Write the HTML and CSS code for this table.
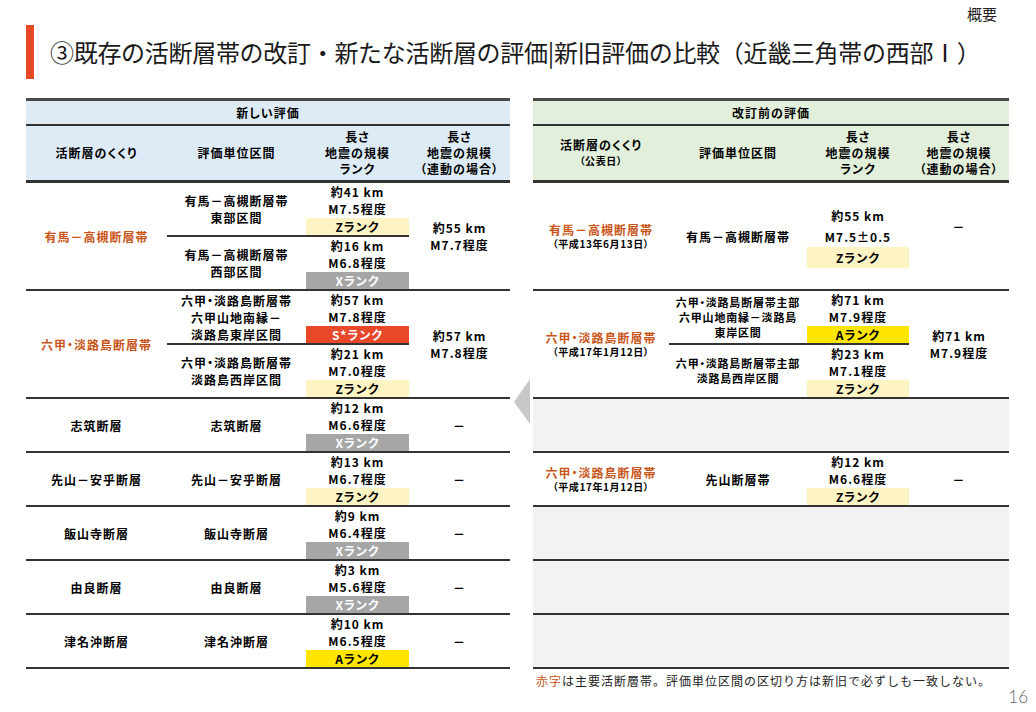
FILE: index.html
```html
<!DOCTYPE html>
<html lang="ja">
<head>
<meta charset="utf-8">
<title>新旧評価の比較</title>
<link rel="stylesheet" href="styles.css">
</head>
<body>
<div class="slide">
  <div class="topbar"><span class="section">概要</span></div>
  <div class="title-row">
    <div class="title-bar"></div>
    <h1 class="title">③既存の活断層帯の改訂・新たな活断層の評価|新旧評価の比較（近畿三角帯の西部Ⅰ）</h1>
  </div>

  <div class="tables">
    <!-- 新しい評価 -->
    <div class="tbl tbl-new">
      <div class="cap">新しい評価</div>
      <div class="head">
        <div class="cell c1">活断層のくくり</div>
        <div class="cell c2">評価単位区間</div>
        <div class="cell c3h">長さ<br>地震の規模<br>ランク</div>
        <div class="cell c4">長さ<br>地震の規模<br>（連動の場合）</div>
      </div>

      <div class="grp">
        <div class="cell c1 red">有馬－高槻断層帯</div>
        <div class="mid">
          <div class="sub">
            <div class="cell c2">有馬－高槻断層帯<br>東部区間</div>
            <div class="c3"><div class="ln">約41 km</div><div class="ln">M7.5程度</div><div class="rank rz">Zランク</div></div>
          </div>
          <div class="sub">
            <div class="cell c2">有馬－高槻断層帯<br>西部区間</div>
            <div class="c3"><div class="ln">約16 km</div><div class="ln">M6.8程度</div><div class="rank rx">Xランク</div></div>
          </div>
        </div>
        <div class="cell c4">約55 km<br>M7.7程度</div>
      </div>

      <div class="grp">
        <div class="cell c1 red">六甲・淡路島断層帯</div>
        <div class="mid">
          <div class="sub">
            <div class="cell c2">六甲・淡路島断層帯<br>六甲山地南縁－<br>淡路島東岸区間</div>
            <div class="c3"><div class="ln">約57 km</div><div class="ln">M7.8程度</div><div class="rank rs">S*ランク</div></div>
          </div>
          <div class="sub">
            <div class="cell c2">六甲・淡路島断層帯<br>淡路島西岸区間</div>
            <div class="c3"><div class="ln">約21 km</div><div class="ln">M7.0程度</div><div class="rank rz">Zランク</div></div>
          </div>
        </div>
        <div class="cell c4">約57 km<br>M7.8程度</div>
      </div>

      <div class="grp">
        <div class="cell c1">志筑断層</div>
        <div class="mid">
          <div class="sub">
            <div class="cell c2">志筑断層</div>
            <div class="c3"><div class="ln">約12 km</div><div class="ln">M6.6程度</div><div class="rank rx">Xランク</div></div>
          </div>
        </div>
        <div class="cell c4">－</div>
      </div>

      <div class="grp">
        <div class="cell c1">先山－安乎断層</div>
        <div class="mid">
          <div class="sub">
            <div class="cell c2">先山－安乎断層</div>
            <div class="c3"><div class="ln">約13 km</div><div class="ln">M6.7程度</div><div class="rank rz">Zランク</div></div>
          </div>
        </div>
        <div class="cell c4">－</div>
      </div>

      <div class="grp">
        <div class="cell c1">飯山寺断層</div>
        <div class="mid">
          <div class="sub">
            <div class="cell c2">飯山寺断層</div>
            <div class="c3"><div class="ln">約9 km</div><div class="ln">M6.4程度</div><div class="rank rx">Xランク</div></div>
          </div>
        </div>
        <div class="cell c4">－</div>
      </div>

      <div class="grp">
        <div class="cell c1">由良断層</div>
        <div class="mid">
          <div class="sub">
            <div class="cell c2">由良断層</div>
            <div class="c3"><div class="ln">約3 km</div><div class="ln">M5.6程度</div><div class="rank rx">Xランク</div></div>
          </div>
        </div>
        <div class="cell c4">－</div>
      </div>

      <div class="grp">
        <div class="cell c1">津名沖断層</div>
        <div class="mid">
          <div class="sub">
            <div class="cell c2">津名沖断層</div>
            <div class="c3"><div class="ln">約10 km</div><div class="ln">M6.5程度</div><div class="rank ra">Aランク</div></div>
          </div>
        </div>
        <div class="cell c4">－</div>
      </div>
    </div>

    <div class="gap">
      <svg class="arrow" width="16" height="45" viewBox="0 0 16 45"><polygon points="16,0 16,45 0,23" fill="#c8c8c8"/></svg>
    </div>

    <!-- 改訂前の評価 -->
    <div class="tbl tbl-old">
      <div class="cap">改訂前の評価</div>
      <div class="head">
        <div class="cell c1 stack"><span>活断層のくくり</span><span class="date">（公表日）</span></div>
        <div class="cell c2">評価単位区間</div>
        <div class="cell c3h">長さ<br>地震の規模<br>ランク</div>
        <div class="cell c4">長さ<br>地震の規模<br>（連動の場合）</div>
      </div>

      <div class="grp">
        <div class="cell c1 stack"><span class="red">有馬－高槻断層帯</span><span class="date">（平成13年6月13日）</span></div>
        <div class="mid">
          <div class="sub tall">
            <div class="cell c2">有馬－高槻断層帯</div>
            <div class="c3 loose"><div class="ln">約55 km</div><div class="ln">M7.5±0.5</div><div class="rank rz">Zランク</div></div>
          </div>
        </div>
        <div class="cell c4 raise">－</div>
      </div>

      <div class="grp">
        <div class="cell c1 stack"><span class="red">六甲・淡路島断層帯</span><span class="date">（平成17年1月12日）</span></div>
        <div class="mid">
          <div class="sub">
            <div class="cell c2 small">六甲・淡路島断層帯主部<br>六甲山地南縁－淡路島<br>東岸区間</div>
            <div class="c3"><div class="ln">約71 km</div><div class="ln">M7.9程度</div><div class="rank ra">Aランク</div></div>
          </div>
          <div class="sub">
            <div class="cell c2 small">六甲・淡路島断層帯主部<br>淡路島西岸区間</div>
            <div class="c3"><div class="ln">約23 km</div><div class="ln">M7.1程度</div><div class="rank rz">Zランク</div></div>
          </div>
        </div>
        <div class="cell c4">約71 km<br>M7.9程度</div>
      </div>

      <div class="grp empty"></div>

      <div class="grp">
        <div class="cell c1 stack"><span class="red">六甲・淡路島断層帯</span><span class="date">（平成17年1月12日）</span></div>
        <div class="mid">
          <div class="sub">
            <div class="cell c2">先山断層帯</div>
            <div class="c3"><div class="ln">約12 km</div><div class="ln">M6.6程度</div><div class="rank rz">Zランク</div></div>
          </div>
        </div>
        <div class="cell c4">－</div>
      </div>

      <div class="grp empty"></div>
      <div class="grp empty"></div>
      <div class="grp empty"></div>
    </div>
  </div>

  <div class="footer">
    <p class="note"><span class="red-note">赤字</span>は主要活断層帯。評価単位区間の区切り方は新旧で必ずしも一致しない。</p>
    <span class="pagenum">16</span>
  </div>
</div>
</body>
</html>
```

FILE: styles.css
```css
* { box-sizing: border-box; margin: 0; padding: 0; }

body {
  width: 1036px;
  height: 712px;
  background: #ffffff;
  color: #000;
  font-family: "Noto Sans CJK JP", "Noto Sans", sans-serif;
  overflow: hidden;
}

.slide {
  width: 1036px;
  height: 712px;
  display: flex;
  flex-direction: column;
}

.topbar {
  height: 25px;
  display: flex;
  justify-content: flex-end;
  padding: 5px 39px 0 0;
}

.section {
  font-size: 15px;
  line-height: 18px;
  color: #222;
}

.title-row {
  height: 54px;
  display: flex;
  align-items: center;
  padding-left: 26px;
}

.title-bar {
  width: 8px;
  height: 54px;
  background: #e8472a;
}

.title {
  margin-left: 16px;
  font-size: 24px;
  font-weight: 400;
  line-height: 30px;
  letter-spacing: -0.3px;
  color: #1a1a1a;
  white-space: nowrap;
}

.tables {
  margin-top: 19px;
  display: flex;
  padding-left: 26px;
}

.tbl {
  display: flex;
  flex-direction: column;
  font-size: 12px;
  font-weight: 700;
  letter-spacing: 1px;
  font-feature-settings: "palt";
}

.tbl-new { width: 484px; }
.tbl-old { width: 476px; }

.gap {
  width: 23px;
  display: flex;
  justify-content: center;
  align-items: flex-start;
  padding-top: 281px;
}

.cap {
  height: 28px;
  border-top: 3px solid #4a4a4a;
  border-bottom: 2px solid #333;
  display: flex;
  align-items: center;
  justify-content: center;
}

.head {
  height: 57px;
  display: flex;
  border-bottom: 3px solid #333;
  line-height: 16px;
}

.tbl-new .cap, .tbl-new .head { background: #ddebf7; }
.tbl-old .cap, .tbl-old .head { background: #e2efda; }

.cell {
  display: flex;
  align-items: center;
  justify-content: center;
  text-align: center;
  line-height: 17px;
}

.head .cell { line-height: 16px; }

.stack { flex-direction: column; }

.tbl-new .c1 { width: 141px; }
.tbl-new .c2 { width: 139px; }
.tbl-new .c3, .tbl-new .c3h { width: 103px; }
.tbl-new .c4 { width: 101px; }

.tbl-old .c1 { width: 136px; }
.tbl-old .c2 { width: 138px; }
.tbl-old .c3, .tbl-old .c3h { width: 102px; }
.tbl-old .c4 { width: 100px; }

.grp {
  display: flex;
  border-bottom: 2px solid #333;
}

.grp.empty {
  height: 54px;
  background: #f2f2f2;
}

.mid {
  display: flex;
  flex-direction: column;
}

.sub {
  display: flex;
  height: 52px;
}

.sub + .sub {
  height: 54px;
  border-top: 2px solid #333;
}

.sub.tall { height: 106px; }

.c3 {
  display: flex;
  flex-direction: column;
}

.ln {
  height: 18px;
  line-height: 18px;
  text-align: center;
}

.ln:first-child {
  height: 17px;
  line-height: 17px;
}

.rank {
  height: 17px;
  line-height: 17px;
  text-align: center;
}

.c3.loose { justify-content: center; }
.c3.loose .ln, .c3.loose .rank {
  height: 21px;
  line-height: 21px;
}

.rz { background: #fef3c3; }
.rx { background: #a6a6a6; color: #fff; }
.rs { background: #e8472a; color: #fff; }
.ra { background: #ffe500; }

.red { color: #c8561a; }

.stack .red { line-height: 15px; }

.date {
  font-size: 10px;
  line-height: 14px;
  letter-spacing: 0.6px;
}

.head .date { line-height: 16px; }

.small {
  font-size: 11px;
  line-height: 15px;
  letter-spacing: 0.8px;
}

.raise { padding-bottom: 20px; }

.footer {
  display: flex;
  margin-top: 4px;
  padding-left: 536px;
  padding-right: 8px;
}

.note {
  font-size: 12px;
  line-height: 16px;
  letter-spacing: 1px;
  color: #222;
}

.red-note { color: #c8561a; }

.pagenum {
  margin-left: auto;
  margin-top: 15px;
  font-family: "Lato", "Noto Sans", sans-serif;
  font-weight: 300;
  font-size: 17px;
  line-height: 18px;
  color: #666;
}
```
